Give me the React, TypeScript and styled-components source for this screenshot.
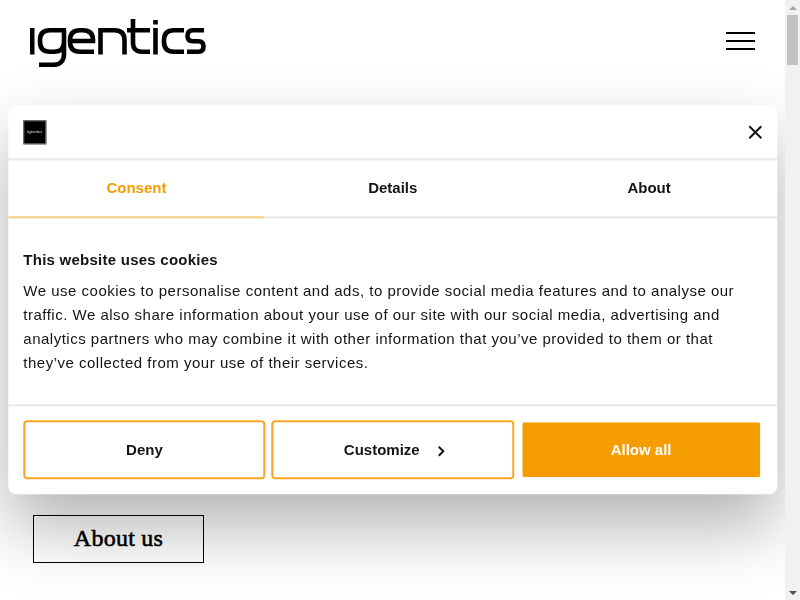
import styled, { createGlobalStyle } from "styled-components";

const GlobalStyle = createGlobalStyle`
  html, body {
    margin: 0;
    padding: 0;
    background: #fff;
    overflow: hidden;
  }
  body {
    font-family: "Liberation Sans", Arial, sans-serif;
    color: #141414;
  }
`;

const Frame = styled.div`
  position: relative;
  height: 100vh;
  display: flex;
  overflow: hidden;
`;
const Page = styled.div`
  flex: 1;
  padding: 0 30px;
`;
const Header = styled.header`
  height: 82px;
  display: flex;
  justify-content: space-between;
  align-items: flex-start;
`;
const Logo = styled.svg`
  display: block;
  width: 180px;
  height: 52px;
  margin-top: 17px;
`;
const Burger = styled.div`
  width: 29px;
  margin: 32px 0 0;
  display: flex;
  flex-direction: column;
  gap: 6px;
  span {
    display: block;
    height: 2px;
    background: #000;
  }
`;
const AboutBtn = styled.a`
  display: flex;
  align-items: center;
  justify-content: center;
  box-sizing: border-box;
  width: 171px;
  height: 48px;
  margin: 433px 0 0 3px;
  padding-bottom: 2px;
  border: 1px solid #000;
  font-family: "Liberation Serif", serif;
  font-weight: 400;
  font-size: 24px;
  letter-spacing: 0.25px;
  -webkit-text-stroke: 0.55px #000;
  color: #000;
`;

const ScrollTrack = styled.div`
  flex: none;
  width: 15px;
  background: #f1f1f1;
  display: flex;
  flex-direction: column;
  align-items: center;
  position: relative;
  z-index: 2;
`;
const ScrollArrow = styled.div<{ $down?: boolean }>`
  flex: none;
  height: 15px;
  width: 15px;
  display: flex;
  align-items: center;
  justify-content: center;
  &::before {
    content: "";
    border-left: 4px solid transparent;
    border-right: 4px solid transparent;
    ${(p) =>
      p.$down
        ? "border-top: 4px solid #505050;"
        : "border-bottom: 4px solid #a3a3a3;"}
  }
`;
const ScrollMiddle = styled.div`
  flex: 1;
`;
const ScrollThumb = styled.div`
  width: 11px;
  height: 50px;
  background: #c1c1c1;
`;

const Dialog = styled.div`
  position: absolute;
  top: 105px;
  left: 8px;
  width: 769px;
  height: 389px;
  transform: translate(0.3px, 0.3px);
  will-change: transform;
  background: #fff;
  border-radius: 8px;
  box-shadow: 0 32px 68px rgba(0, 0, 0, 0.3);
  display: flex;
  flex-direction: column;
  font-size: 15px;
`;
const TopBar = styled.div`
  height: 53px;
  flex: none;
  display: flex;
  align-items: center;
  justify-content: space-between;
  padding: 0 15px;
  border-bottom: 2px solid #e9e9e9;
`;
const MiniLogo = styled.div`
  width: 23px;
  height: 24px;
  background: #000;
  border: 1px solid #777;
  box-sizing: border-box;
  display: flex;
  align-items: center;
  justify-content: center;
  color: #bbb;
  font-size: 4px;
  font-weight: 700;
`;
const CloseBtn = styled.svg`
  width: 14px;
  height: 14px;
  display: block;
`;
const Tabs = styled.nav`
  display: flex;
  height: 58px;
  flex: none;
  box-sizing: border-box;
  border-bottom: 2px solid #e9e9e9;
`;
const Tab = styled.div<{ $active?: boolean }>`
  flex: 1;
  display: flex;
  align-items: center;
  justify-content: center;
  padding-bottom: 2px;
  font-weight: 700;
  color: ${(p) => (p.$active ? "#f59c00" : "#141414")};
  margin-bottom: -2px;
  border-bottom: 2px solid ${(p) => (p.$active ? "#f9cf86" : "transparent")};
`;
const Body = styled.div`
  flex: 1;
  padding: 30px 15px 0;
  letter-spacing: 0.5px;
  line-height: 24px;
`;
const Title = styled.h2`
  margin: 0 0 7px;
  font-size: 15px;
  font-weight: 700;
  line-height: 24px;
  letter-spacing: 0.25px;
`;
const Text = styled.p`
  margin: 0;
`;
const Footer = styled.div`
  flex: none;
  height: 90px;
  box-sizing: border-box;
  border-top: 2px solid #e9e9e9;
  padding: 14px 15px 15px;
  display: grid;
  grid-template-columns: repeat(3, 1fr);
  gap: 6px;
`;
const Btn = styled.button<{ $fill?: boolean }>`
  font: 700 15px "Liberation Sans", Arial, sans-serif;
  border-radius: 4px;
  border: 2px solid ${(p) => (p.$fill ? "#fff" : "#f6a623")};
  background: ${(p) => (p.$fill ? "#f59c00" : "#fff")};
  background-clip: padding-box;
  color: ${(p) => (p.$fill ? "#fff" : "#141414")};
  display: flex;
  align-items: center;
  justify-content: center;
  gap: 18px;
  padding: 0;
`;
const Chevron = styled.svg`
  width: 8px;
  height: 12px;
  display: block;
  margin: 3px -4px 0 0;
`;

function App() {
  return (
    <>
      <GlobalStyle />
      <Frame>
        <Page>
          <Header>
            <Logo viewBox="30 17 180 52" fill="none" stroke="#000" strokeWidth="4.6">
              <path d="M30 30.300h2.200v24.200" />
              <path d="M66 30.300H50c-6.500 0-10 3.500-10 10v1.500c0 6.500 3.500 10 10 10h4c6.500 0 10-3.500 10-10V30.300v24c0 6.500-4 10.500-10 10.500H39" />
              <path d="M70 41h23v-.7c0-6.500-3.500-10-10-10h-3c-6.500 0-10 3.500-10 10v1.500c0 6.500 3.500 10 10 10h14" />
              <path d="M100.500 54.500V30.300h14c6.500 0 10 3.500 10 10v14.200" />
              <path d="M133 19v24c0 5.500 3.300 8.800 8.800 8.800h8.200M127 30.300h23" />
              <path d="M155.500 28v26.500M155.500 20v4.500" />
              <path d="M184 30.300h-10c-6.500 0-10 3.500-10 10v1.500c0 6.500 3.500 10 10 10h10" />
              <path d="M204 30.300h-11c-3.500 0-5.500 2-5.500 5.500s2 5.500 5.500 5.500h5.500c3.500 0 5 2 5 5.200s-1.500 5.300-5 5.300H187" />
            </Logo>
            <Burger>
              <span />
              <span />
              <span />
            </Burger>
          </Header>
          <AboutBtn>About us</AboutBtn>
        </Page>
        <ScrollTrack>
          <ScrollArrow />
          <ScrollThumb />
          <ScrollMiddle />
          <ScrollArrow $down />
        </ScrollTrack>
        <Dialog>
          <TopBar>
            <MiniLogo>igentics</MiniLogo>
            <CloseBtn viewBox="0 0 14 14" stroke="#141414" strokeWidth="2" fill="none">
              <path d="M1 1l12 12M13 1L1 13" />
            </CloseBtn>
          </TopBar>
          <Tabs>
            <Tab $active>Consent</Tab>
            <Tab>Details</Tab>
            <Tab>About</Tab>
          </Tabs>
          <Body>
            <Title>This website uses cookies</Title>
            <Text>
              We use cookies to personalise content and ads, to provide social media features and to analyse our
              traffic. We also share information about your use of our site with our social media, advertising and
              analytics partners who may combine it with other information that you’ve provided to them or that
              they’ve collected from your use of their services.
            </Text>
          </Body>
          <Footer>
            <Btn>Deny</Btn>
            <Btn>
              Customize
              <Chevron viewBox="0 0 8 12" fill="none" stroke="#141414" strokeWidth="2">
                <path d="M1.500 1.500L6 6l-4.500 4.500" />
              </Chevron>
            </Btn>
            <Btn $fill>Allow all</Btn>
          </Footer>
        </Dialog>
      </Frame>
    </>
  );
}

export default App;
